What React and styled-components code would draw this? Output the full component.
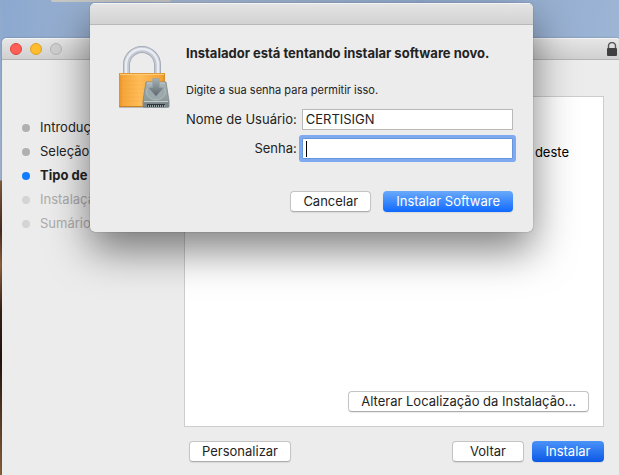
import { useState } from "react";
import styled, { createGlobalStyle, css } from "styled-components";

const steps = [
	{ label: "Introdução", state: "done" },
	{ label: "Seleção do Destino", state: "done" },
	{ label: "Tipo de Instalação", state: "current" },
	{ label: "Instalação", state: "pending" },
	{ label: "Sumário", state: "pending" },
];

const PadlockIcon = () => (
	<svg width='54' height='64' viewBox='0 0 54 64' aria-hidden='true'>
		<defs>
			<linearGradient id='gold' x1='0' x2='1'>
				<stop offset='0' stopColor='#e08e24' />
				<stop offset='0.08' stopColor='#f5a53a' />
				<stop offset='0.45' stopColor='#ffbd58' />
				<stop offset='0.94' stopColor='#f3a036' />
				<stop offset='1' stopColor='#d98a22' />
			</linearGradient>
			<linearGradient id='drive' x1='0' x2='0' y1='0' y2='1'>
				<stop offset='0' stopColor='#a9b4b8' />
				<stop offset='1' stopColor='#84908f' />
			</linearGradient>
			<linearGradient id='arrow' x1='0' x2='0' y1='0' y2='1'>
				<stop offset='0' stopColor='#a5afb2' />
				<stop offset='1' stopColor='#5b676c' />
			</linearGradient>
		</defs>
		<path d='M8.5 30V20a15.5 15.5 0 0 1 31 0V30' fill='none' stroke='#9fa6b2' strokeWidth='7' />
		<path d='M8.5 30V20a15.5 15.5 0 0 1 31 0V30' fill='none' stroke='#c3c8d2' strokeWidth='5.5' />
		<path d='M8 30V20a16 16 0 0 1 32 0V30' fill='none' stroke='#e9ecf2' strokeWidth='2.5' />
		<rect x='1' y='61' width='47' height='2' rx='1' fill='#999' opacity='0.6' />
		<rect x='1' y='28' width='46' height='34' rx='1' fill='url(#gold)' />
		<path d='M1 28.5h46' stroke='#e09a3a' />
		<path d='M2 29.5h44' stroke='#ffcb6e' />
		<path d='M2 36h44M2 40h44M2 44h44M2 48h44M2 52h44M2 56h44' stroke='#e9962b' strokeWidth='1' opacity='0.15' />
		<path d='M1 61.5h46' stroke='#c98327' />
		<path d='M28 37h20l3 19v6H25v-6z' fill='url(#drive)' stroke='#7a878c' strokeWidth='0.8' />
		<path d='M29 38h18' stroke='#c3cdd0' />
		<ellipse cx='38' cy='47' rx='9.5' ry='8' fill='#9ba9ad' stroke='#b3bec1' strokeWidth='0.8' />
		<path d='M26 56.5h24' stroke='#c3cacc' />
		<rect x='25.5' y='57.5' width='25' height='5' fill='#7b868a' />
		<path d='M29 60.5h18' stroke='#30383b' strokeWidth='3' />
		<path d='M30 61h17' stroke='#9ba4a6' strokeWidth='2' strokeDasharray='1 1' />
		<path d='M34.5 33.5h7v9H46l-8 9-8-9h4.5z' fill='url(#arrow)' stroke='#9aa5a9' strokeWidth='0.6' />
	</svg>
);

const LockBadge = () => (
	<svg width='12' height='14' viewBox='0 0 12 14' role='img' aria-label='Bloqueado'>
		<path d='M2.5 7V4a3.5 3.5 0 0 1 7 0v3' fill='none' stroke='#555' strokeWidth='1.4' />
		<rect x='1' y='6' width='10' height='8' rx='1' fill='#404040' />
	</svg>
);

const App = () => {
	const [user, setUser] = useState("CERTISIGN");
	const [password, setPassword] = useState("");

	return (
		<Desktop>
			<GlobalStyle />
			<MenuEdge />
			<Window>
				<TitleBar>
					<Lights>
						<Light $color='#ff5f57' $border='#e0443e' aria-label='Fechar' />
						<Light $color='#febc2e' $border='#dea123' aria-label='Minimizar' />
						<Light $color='#cfcfcf' $border='#b5b5b5' aria-label='Zoom' disabled />
					</Lights>
					<LockBadge />
				</TitleBar>
				<Body>
					<Steps>
						{steps.map((step) => (
							<Step key={step.label} $state={step.state}>
								{step.label}
							</Step>
						))}
					</Steps>
					<Main>
						<Panel>
							<Message>deste</Message>
							<Button>Alterar Localização da Instalação...</Button>
						</Panel>
						<Footer>
							<Button>Personalizar</Button>
							<Group>
								<Button>Voltar</Button>
								<Button $primary='dark'>Instalar</Button>
							</Group>
						</Footer>
					</Main>
				</Body>
				<Dialog role='dialog' aria-labelledby='dialog-title'>
					<DialogBar />
					<DialogBody onSubmit={(e) => e.preventDefault()}>
						<PadlockIcon />
						<DialogContent>
							<Heading id='dialog-title'>Instalador está tentando instalar software novo.</Heading>
							<Hint>Digite a sua senha para permitir isso.</Hint>
							<Fields>
								<Label htmlFor='user'>Nome de Usuário:</Label>
								<Input id='user' value={user} onChange={(e) => setUser(e.target.value)} />
								<Label htmlFor='password'>Senha:</Label>
								<Input
									id='password'
									type='password'
									$active
									value={password}
									onChange={(e) => setPassword(e.target.value)}
								/>
							</Fields>
							<Actions>
								<Button type='button'>Cancelar</Button>
								<Button type='submit' $primary='light'>
									Instalar Software
								</Button>
							</Actions>
						</DialogContent>
					</DialogBody>
				</Dialog>
			</Window>
		</Desktop>
	);
};

const GlobalStyle = createGlobalStyle`
	* {
		box-sizing: border-box;
	}

	body {
		margin: 0;
		color: #232323;
		font-family: Inter, "Liberation Sans", sans-serif;
		font-size: 13px;
		line-height: 16px;
	}

	button,
	input {
		font: inherit;
		color: inherit;
	}
`;

const Desktop = styled.div`
	display: flex;
	flex-direction: column;
	min-height: 100vh;
	padding-left: 2px;
	overflow: hidden;
	background:
		linear-gradient(#8fa9cc 0, #a0b3d0 180px, #805c3d 181px, #492b20 230px, #8c623d 265px, #382118 310px, #211310 360px, #49301f 400px, #87603b 475px) left / 2px 100% no-repeat,
		linear-gradient(100deg, #8ba8cf 0, #a6b8d3 25%, #93acce 60%, #9ab2d3 85%, #a9bfdd 100%);
`;

const MenuEdge = styled.div`
	width: 120px;
	height: 2px;
	margin: 0 0 36px 49px;
	background: #c7c7c5;
	border-radius: 0 0 2px 2px;
`;

const Window = styled.main`
	position: relative;
	display: flex;
	flex-direction: column;
	flex: 1;
	/* runs past the right edge of the desktop */
	margin-right: -2px;
	border-radius: 5px 5px 0 0;
	background: #ececec;
	box-shadow: 0 0 2px rgba(0, 0, 0, 0.3);
`;

const TitleBar = styled.header`
	display: flex;
	align-items: center;
	justify-content: space-between;
	height: 22px;
	padding: 0 3px 0 8px;
	border-top: 1px solid #f4f4f4;
	border-bottom: 1px solid #b4b4b4;
	border-radius: 5px 5px 0 0;
	background: linear-gradient(#e6e6e6, #d0d0d0);
`;

const Lights = styled.div`
	display: flex;
	gap: 8px;
`;

const Light = styled.button`
	width: 12px;
	height: 12px;
	padding: 0;
	border: 1px solid ${({ $border }) => $border};
	border-radius: 50%;
	background: ${({ $color }) => $color};
`;

const Body = styled.div`
	display: flex;
	flex: 1;
`;

const Steps = styled.ol`
	flex: 0 0 182px;
	margin: 0;
	padding: 55px 0 0 20px;
	list-style: none;
`;

const stepColors = {
	done: { dot: "#b0b0b0", text: "#232323" },
	current: { dot: "#127bff", text: "#232323" },
	pending: { dot: "#d4d4d4", text: "#ababab" },
};

const Step = styled.li`
	display: flex;
	align-items: flex-start;
	gap: 10px;
	height: 24px;
	padding-top: 4px;
	white-space: nowrap;
	color: ${({ $state }) => stepColors[$state].text};
	font-weight: ${({ $state }) => ($state === "current" ? 700 : 400)};

	&::before {
		content: "";
		width: 8px;
		height: 8px;
		margin-top: 5px;
		border-radius: 50%;
		background: ${({ $state }) => stepColors[$state].dot};
	}
`;

const Main = styled.section`
	display: flex;
	flex-direction: column;
	flex: 1;
	padding: 36px 17px 13px 0;
`;

const Panel = styled.div`
	display: flex;
	flex-direction: column;
	align-items: flex-end;
	justify-content: space-between;
	flex: 1;
	padding: 47px 14px 14px;
	border: 1px solid #cdcdcd;
	background: #fff;
`;

const Message = styled.p`
	margin: 0;
	padding-right: 20px;
	color: #000;
`;

const Footer = styled.footer`
	display: flex;
	justify-content: space-between;
	padding: 14px 0 0 5px;
`;

const Group = styled.div`
	display: flex;
	gap: 8px;
`;

const primaryFill = {
	light: "linear-gradient(#6aaafa, #0f69ff)",
	dark: "linear-gradient(#4a93f8, #0b58e6)",
};

const Button = styled.button`
	min-width: 72px;
	height: 21px;
	padding: 0 12px 1px;
	border: 1px solid #c4c4c4;
	border-bottom-color: #adadad;
	border-radius: 4px;
	background: #fff;
	box-shadow: 0 1px 1px rgba(0, 0, 0, 0.08);
	white-space: nowrap;

	${({ $primary }) =>
		$primary &&
		css`
			border-color: transparent;
			background: ${primaryFill[$primary]} border-box;
			color: #fff;
		`}
`;

const Dialog = styled.div`
	position: absolute;
	top: -35px;
	left: 88px;
	right: 88px;
	overflow: hidden;
	border-radius: 5px;
	background: #ececec;
	box-shadow:
		0 0 1px rgba(0, 0, 0, 0.6),
		0 18px 42px rgba(0, 0, 0, 0.5);
`;

const DialogBar = styled.div`
	height: 22px;
	border-top: 1px solid #f4f4f4;
	border-bottom: 1px solid #b8b8b8;
	background: linear-gradient(#e4e4e4, #d2d2d2);
`;

const DialogBody = styled.form`
	display: flex;
	align-items: flex-start;
	gap: 14px;
	padding: 20px 20px 20px 28px;
`;

const DialogContent = styled.div`
	flex: 1;
	min-width: 0;
`;

const Heading = styled.h1`
	margin: 0;
	font-size: 13px;
	font-weight: 700;
	line-height: 16px;
	white-space: nowrap;
`;

const Hint = styled.p`
	margin: 21px 0 11px;
	font-size: 11px;
`;

const Fields = styled.div`
	display: grid;
	grid-template-columns: auto 1fr;
	align-items: center;
	gap: 8px 5px;
`;

const Label = styled.label`
	padding-bottom: 2px;
	text-align: right;
`;

const Input = styled.input`
	width: 100%;
	min-width: 0;
	height: 21px;
	padding: 0 3px 1px;
	border: 1px solid #b9b9b9;
	border-radius: 0;
	outline: none;
	background: #fff;

	${({ $active }) =>
		$active &&
		css`
			border-color: #6896dd;
			border-radius: 1px;
			background: linear-gradient(#000, #000) 3px 50% / 1px 16px no-repeat #fff;
			box-shadow: 0 0 0 3px #7eaaf0;
			caret-color: transparent;
		`}
`;

const Actions = styled.div`
	display: flex;
	justify-content: flex-end;
	gap: 12px;
	padding-top: 32px;
`;

export default App;
